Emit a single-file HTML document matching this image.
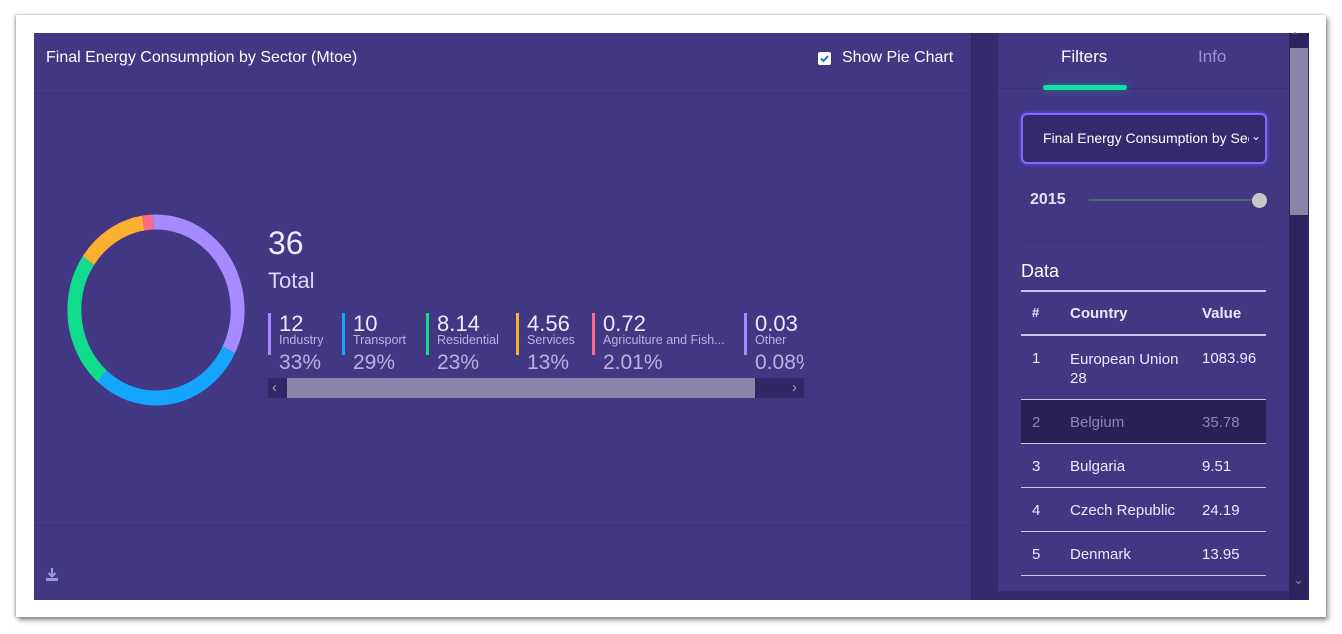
<!DOCTYPE html>
<html><head><meta charset="utf-8"><style>
body{margin:0;width:1342px;height:634px;background:#fff;font-family:"Liberation Sans",sans-serif;position:relative;overflow:hidden}
.frame{position:absolute;left:16px;top:15px;width:1310px;height:602px;background:#fff;box-shadow:2px 3px 5px rgba(0,0,0,.45),-1px 0 3px rgba(0,0,0,.3)}
.app{position:absolute;left:34px;top:33px;width:1275px;height:567px;background:#413783}
.abs{position:absolute}
.w{color:#fff}
.leg{position:absolute;top:313px;height:42px;border-left:3px solid}
.leg .n{position:absolute;left:8px;top:0;font-size:22px;color:#eeeaff;line-height:22px}
.leg .l{position:absolute;left:8px;top:20px;font-size:12.5px;color:#b9b3dd;white-space:nowrap}
.leg .p{position:absolute;left:8px;top:38px;font-size:21px;color:#b9b3dd;white-space:nowrap}
.row{position:absolute;left:1021px;width:245px;border-bottom:1.5px solid #c9c5e6;font-size:15px;color:#ece9ff}
.row span{position:absolute}
</style></head><body>
<div class="frame"></div>
<div class="app"></div>
<div class="abs" style="left:34px;top:93px;width:937px;height:1px;background:#3a307a"></div>
<div class="abs w" style="left:46px;top:49px;font-size:16px">Final Energy Consumption by Sector (Mtoe)</div>
<div class="abs" style="left:818px;top:52px;width:13px;height:13px;background:#fff;border-radius:2px"><svg width="13" height="13"><path d="M3 6.5l2.5 2.5 4.5-5" stroke="#2a6fdb" stroke-width="2" fill="none"/></svg></div>
<div class="abs w" style="left:842px;top:49px;font-size:16px">Show Pie Chart</div>
<div class="abs" style="left:34px;top:525px;width:937px;height:1px;background:#3a307a"></div>
<svg class="abs" style="left:44px;top:567px" width="16" height="16"><path d="M8 1v8M4.5 6l3.5 3.5L11.5 6" stroke="#9d95e8" stroke-width="2.2" fill="none"/><rect x="2" y="11" width="12" height="3" fill="#9d95e8"/></svg>
<svg class="abs" style="left:66px;top:213px" width="180" height="194" viewBox="0 0 194 194" preserveAspectRatio="none">
<g transform="rotate(-92 97 97)" fill="none" stroke-width="15">
<circle cx="97" cy="97" r="88" stroke="#a58bff" stroke-dasharray="182.5 1000" />
<circle cx="97" cy="97" r="88" stroke="#14a5ff" stroke-dasharray="0 182.5 160.3 1000"/>
<circle cx="97" cy="97" r="88" stroke="#12dd8f" stroke-dasharray="0 342.8 127.2 1000"/>
<circle cx="97" cy="97" r="88" stroke="#fbb030" stroke-dasharray="0 470 71.9 1000"/>
<circle cx="97" cy="97" r="88" stroke="#fd6a87" stroke-dasharray="0 541.9 11 1000"/>
</g></svg>
<div class="abs" style="left:268px;top:225px;font-size:32px;color:#eeeaff">36</div>
<div class="abs" style="left:268px;top:268px;font-size:22px;color:#dcd8f7">Total</div>
<div class="leg" style="left:268px;border-color:#a58bff"><div class="n">12</div><div class="l">Industry</div><div class="p">33%</div></div>
<div class="leg" style="left:342px;border-color:#14a5ff"><div class="n">10</div><div class="l">Transport</div><div class="p">29%</div></div>
<div class="leg" style="left:426px;border-color:#12dd8f"><div class="n">8.14</div><div class="l">Residential</div><div class="p">23%</div></div>
<div class="leg" style="left:516px;border-color:#fbb030"><div class="n">4.56</div><div class="l">Services</div><div class="p">13%</div></div>
<div class="leg" style="left:592px;border-color:#fd6a87"><div class="n">0.72</div><div class="l">Agriculture and Fish...</div><div class="p">2.01%</div></div>
<div style="position:absolute;left:744px;top:300px;width:60px;height:80px;overflow:hidden"><div class="leg" style="left:0;top:13px;border-color:#a58bff"><div class="n">0.03</div><div class="l">Other</div><div class="p">0.08%</div></div></div>
<div class="abs" style="left:268px;top:378px;width:536px;height:20px;background:#2f2766"></div>
<div class="abs" style="left:287px;top:378px;width:468px;height:20px;background:#8a84a8"></div>
<div class="abs" style="left:272px;top:379px;color:#aaa;font-size:15px">‹</div>
<div class="abs" style="left:792px;top:379px;color:#aaa;font-size:15px">›</div>
<div class="abs" style="left:971px;top:33px;width:27px;height:567px;background:#342a6e"></div>
<div class="abs" style="left:998px;top:33px;width:291px;height:558px;background:#413783;border-radius:0 0 0 8px"></div>
<div class="abs" style="left:998px;top:591px;width:291px;height:9px;background:#342a6e"></div>
<div class="abs" style="left:1289px;top:33px;width:20px;height:567px;background:#2e2560"></div>
<div class="abs" style="left:1290px;top:48px;width:18px;height:167px;background:#8a84a8"></div>
<div class="abs" style="left:1293px;top:30px;color:#888;font-size:12px">ˆ</div>
<div class="abs" style="left:1293px;top:572px;color:#888;font-size:13px">⌄</div>
<div class="abs" style="left:998px;top:88px;width:291px;height:1px;background:#3a307a"></div>
<div class="abs w" style="left:1061px;top:47px;font-size:17px">Filters</div>
<div class="abs" style="left:1198px;top:47px;font-size:17px;color:#9c94cf">Info</div>
<div class="abs" style="left:1043px;top:85px;width:84px;height:5px;border-radius:3px;background:#14e0a0;box-shadow:0 0 8px rgba(20,224,160,.4)"></div>
<div class="abs" style="left:1021px;top:113px;width:242px;height:47px;border:2px solid #8a66ff;border-radius:6px;background:#342a6e;box-shadow:0 0 4px #5a5cff"></div>
<div class="abs w" style="left:1043px;top:130px;font-size:14px;width:206px;overflow:hidden;white-space:nowrap">Final Energy Consumption by Sector</div>
<div class="abs w" style="left:1251px;top:129px;font-size:12px">⌄</div>
<div class="abs" style="left:1030px;top:191px;font-size:16px;font-weight:bold;color:#e3e0f7">2015</div>
<div class="abs" style="left:1089px;top:199px;width:170px;height:2px;background:#4a6a5a"></div>
<div class="abs" style="left:1252px;top:193px;width:15px;height:15px;border-radius:50%;background:#c8c8c8"></div>
<div class="abs" style="left:1021px;top:241px;width:245px;height:1px;background:#3a307a"></div>
<div class="abs w" style="left:1021px;top:261px;font-size:18px">Data</div>
<div class="abs" style="left:1021px;top:290px;width:245px;height:1.5px;background:#c9c5e6"></div>
<div class="row" style="top:291px;height:43px;font-weight:bold;border-bottom-width:2px"><span style="left:11px;top:14px;font-size:13px">#</span><span style="left:49px;top:14px">Country</span><span style="left:181px;top:14px">Value</span></div>
<div class="row" style="top:336px;height:63px"><span style="left:11px;top:14px">1</span><span style="left:49px;top:14px;line-height:19px">European Union<br>28</span><span style="left:181px;top:14px">1083.96</span></div>
<div class="row" style="top:400px;height:43px;background:#282057;color:#8d86b8"><span style="left:11px;top:14px">2</span><span style="left:49px;top:14px">Belgium</span><span style="left:181px;top:14px">35.78</span></div>
<div class="row" style="top:444px;height:43px"><span style="left:11px;top:14px">3</span><span style="left:49px;top:14px">Bulgaria</span><span style="left:181px;top:14px">9.51</span></div>
<div class="row" style="top:488px;height:43px"><span style="left:11px;top:14px">4</span><span style="left:49px;top:14px">Czech Republic</span><span style="left:181px;top:14px">24.19</span></div>
<div class="row" style="top:532px;height:43px"><span style="left:11px;top:14px">5</span><span style="left:49px;top:14px">Denmark</span><span style="left:181px;top:14px">13.95</span></div>
</body></html>
